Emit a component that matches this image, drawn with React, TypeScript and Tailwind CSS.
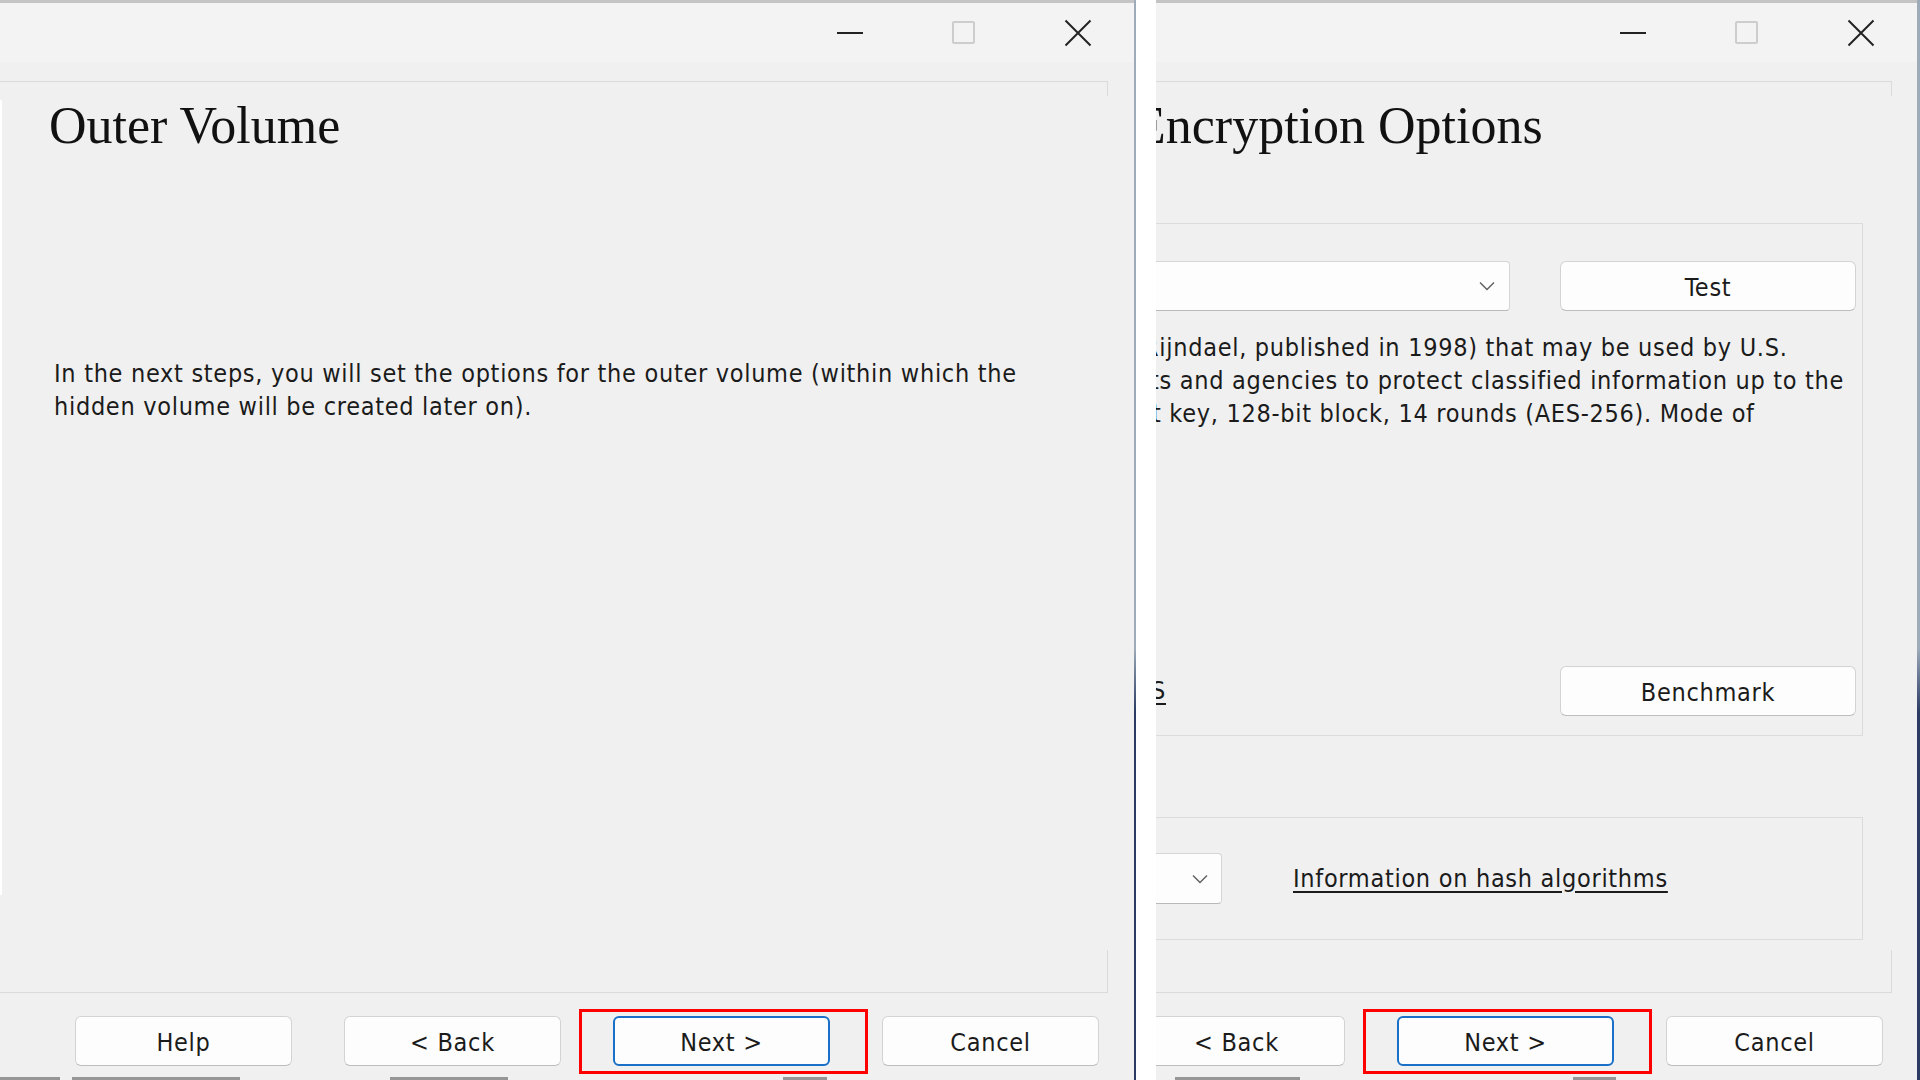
import React from 'react';

const ui = "font-['DejaVu_Sans_Condensed','DejaVu_Sans',sans-serif] text-[25px] tracking-[0.7px] text-[#1b1b1b]";
const serif = "font-['Liberation_Serif','Times_New_Roman',serif] text-[52px] leading-none tracking-normal text-[#111]";

function Caption() {
  return (
    <div className="flex h-[62px] shrink-0 justify-end border-t-[3px] border-[#c4c4c4] bg-[#f3f3f3]">
      <div className="flex w-[113px] items-center justify-center">
        <div className="mr-[3px] h-[2px] w-[26px] bg-[#222]" />
      </div>
      <div className="flex w-[113px] items-center justify-center">
        <div className="mr-[3px] h-[23px] w-[23px] rounded-[2px] border-2 border-[#cdcdcd]" />
      </div>
      <div className="flex w-[113px] items-center justify-center">
        <svg width="28" height="28" viewBox="0 0 28 28">
          <path d="M1.5 1.5L26.5 26.5M26.5 1.5L1.5 26.5" stroke="#222" strokeWidth="2" />
        </svg>
      </div>
    </div>
  );
}

function Btn({ label, primary }: { label: string; primary?: boolean }) {
  return (
    <div
      className={`flex h-[50px] w-[217px] shrink-0 items-center justify-center rounded-[6px] bg-[#fdfdfd] pt-[3px] ${
        primary ? 'border-2 border-[#1a6fc9]' : 'border border-[#d3d3d3] border-b-[#bdbdbd]'
      }`}
    >
      {label}
    </div>
  );
}

function Marked({ children }: { children: React.ReactNode }) {
  return (
    <div className="relative">
      {children}
      <div className="absolute -top-[7px] -bottom-[8px] -left-[34px] -right-[38px] border-[3px] border-[#f00]" />
    </div>
  );
}

function Chevron() {
  return (
    <svg width="16" height="10" viewBox="0 0 16 10">
      <path d="M1 1.5L8 8.5L15 1.5" fill="none" stroke="#5f5f5f" strokeWidth="1.4" />
    </svg>
  );
}

function Fragments({ bits }: { bits: [number, number][] }) {
  return (
    <div className="flex h-[14px] shrink-0 items-end">
      {bits.map(([ml, w], i) => (
        <div key={i} style={{ marginLeft: ml, width: w }} className="h-[3px] bg-[#5a5a5a] opacity-60" />
      ))}
    </div>
  );
}

function LeftWindow() {
  return (
    <div className={`relative flex h-full w-[1134px] shrink-0 flex-col overflow-hidden bg-[#f0f0f0] ${ui}`}>
      <Caption />
      <div className="mt-[19px] h-[15px] w-[1108px] border-t border-r border-[#dadada]" />
      <div className={`mt-[4px] pl-[49px] ${serif}`}>Outer Volume</div>
      <div className="mt-[205px] pl-[54px] leading-[33px] whitespace-nowrap">
        <div>In the next steps, you will set the options for the outer volume (within which the</div>
        <div>hidden volume will be created later on).</div>
      </div>
      <div className="absolute top-[100px] left-0 h-[795px] w-[2px] bg-white" />
      <div className="mt-auto h-[43px] w-[1108px] border-r border-b border-[#dadada]" />
      <div className="mt-[23px] flex gap-[52px] pl-[75px]">
        <Btn label="Help" />
        <Btn label="< Back" />
        <Marked>
          <Btn label="Next >" primary />
        </Marked>
        <Btn label="Cancel" />
      </div>
      <Fragments bits={[[0, 60], [12, 168], [150, 118], [275, 44]]} />
    </div>
  );
}

function RightWindow() {
  return (
    <div className={`flex h-full w-[761px] shrink-0 flex-col overflow-hidden bg-[#f0f0f0] ${ui}`}>
      <Caption />
      <div className="mt-[19px] h-[15px] w-[736px] border-t border-r border-[#dadada]" />
      <div className={`mt-[4px] -ml-[22px] whitespace-nowrap ${serif}`}>Encryption Options</div>

      <div className="mt-[71px] -ml-[20px] flex h-[513px] w-[727px] shrink-0 flex-col border border-[#dcdcdc] pt-[37px] pr-[6px] pb-[19px]">
        <div className="flex gap-[50px]">
          <div className="ml-[9px] flex h-[50px] w-[364px] items-center justify-end rounded-[4px] border border-[#d5d5d5] border-b-[#b9b9b9] bg-[#fdfdfd] pr-[14px]">
            <Chevron />
          </div>
          <div className="flex h-[50px] w-[296px] items-center justify-center rounded-[6px] border border-[#d3d3d3] border-b-[#bdbdbd] bg-[#fdfdfd] pt-[3px]">
            Test
          </div>
        </div>
        <div className="mt-[20px] leading-[33px] whitespace-nowrap">
          <div className="ml-[6px]">Rijndael, published in 1998) that may be used by U.S.</div>
          <div className="ml-[13px]">ts and agencies to protect classified information up to the</div>
          <div className="ml-[15px]">t key, 128-bit block, 14 rounds (AES-256). Mode of</div>
        </div>
        <div className="mt-auto flex items-center justify-between">
          <span className="-ml-[17px] underline underline-offset-4">AES</span>
          <div className="flex h-[50px] w-[296px] items-center justify-center rounded-[6px] border border-[#d3d3d3] border-b-[#bdbdbd] bg-[#fdfdfd] pt-[3px]">
            Benchmark
          </div>
        </div>
      </div>

      <div className="mt-[81px] -ml-[20px] flex h-[123px] w-[727px] shrink-0 items-center border border-[#dcdcdc]">
        <div className="-ml-[65px] flex h-[51px] w-[150px] items-center justify-end rounded-[4px] border border-[#d5d5d5] border-b-[#b9b9b9] bg-[#fdfdfd] pr-[13px]">
          <Chevron />
        </div>
        <span className="ml-[71px] underline underline-offset-4">Information on hash algorithms</span>
      </div>

      <div className="mt-auto h-[43px] w-[736px] border-r border-b border-[#dadada]" />
      <div className="mt-[23px] -ml-[28px] flex gap-[52px]">
        <Btn label="< Back" />
        <Marked>
          <Btn label="Next >" primary />
        </Marked>
        <Btn label="Cancel" />
      </div>
      <Fragments bits={[[19, 125], [273, 43]]} />
    </div>
  );
}

export default function App() {
  return (
    <div className="flex h-[1080px] w-[1920px] overflow-hidden bg-white">
      <LeftWindow />
      <div className="w-[2px] shrink-0 bg-linear-to-b from-[#9eacba] from-60% to-[#2b3b63] to-66%" />
      <div className="w-[20px] shrink-0 bg-white" />
      <RightWindow />
      <div className="w-[3px] shrink-0 bg-linear-to-b from-[#9eacba] from-60% to-[#2b3b63] to-66%" />
    </div>
  );
}
